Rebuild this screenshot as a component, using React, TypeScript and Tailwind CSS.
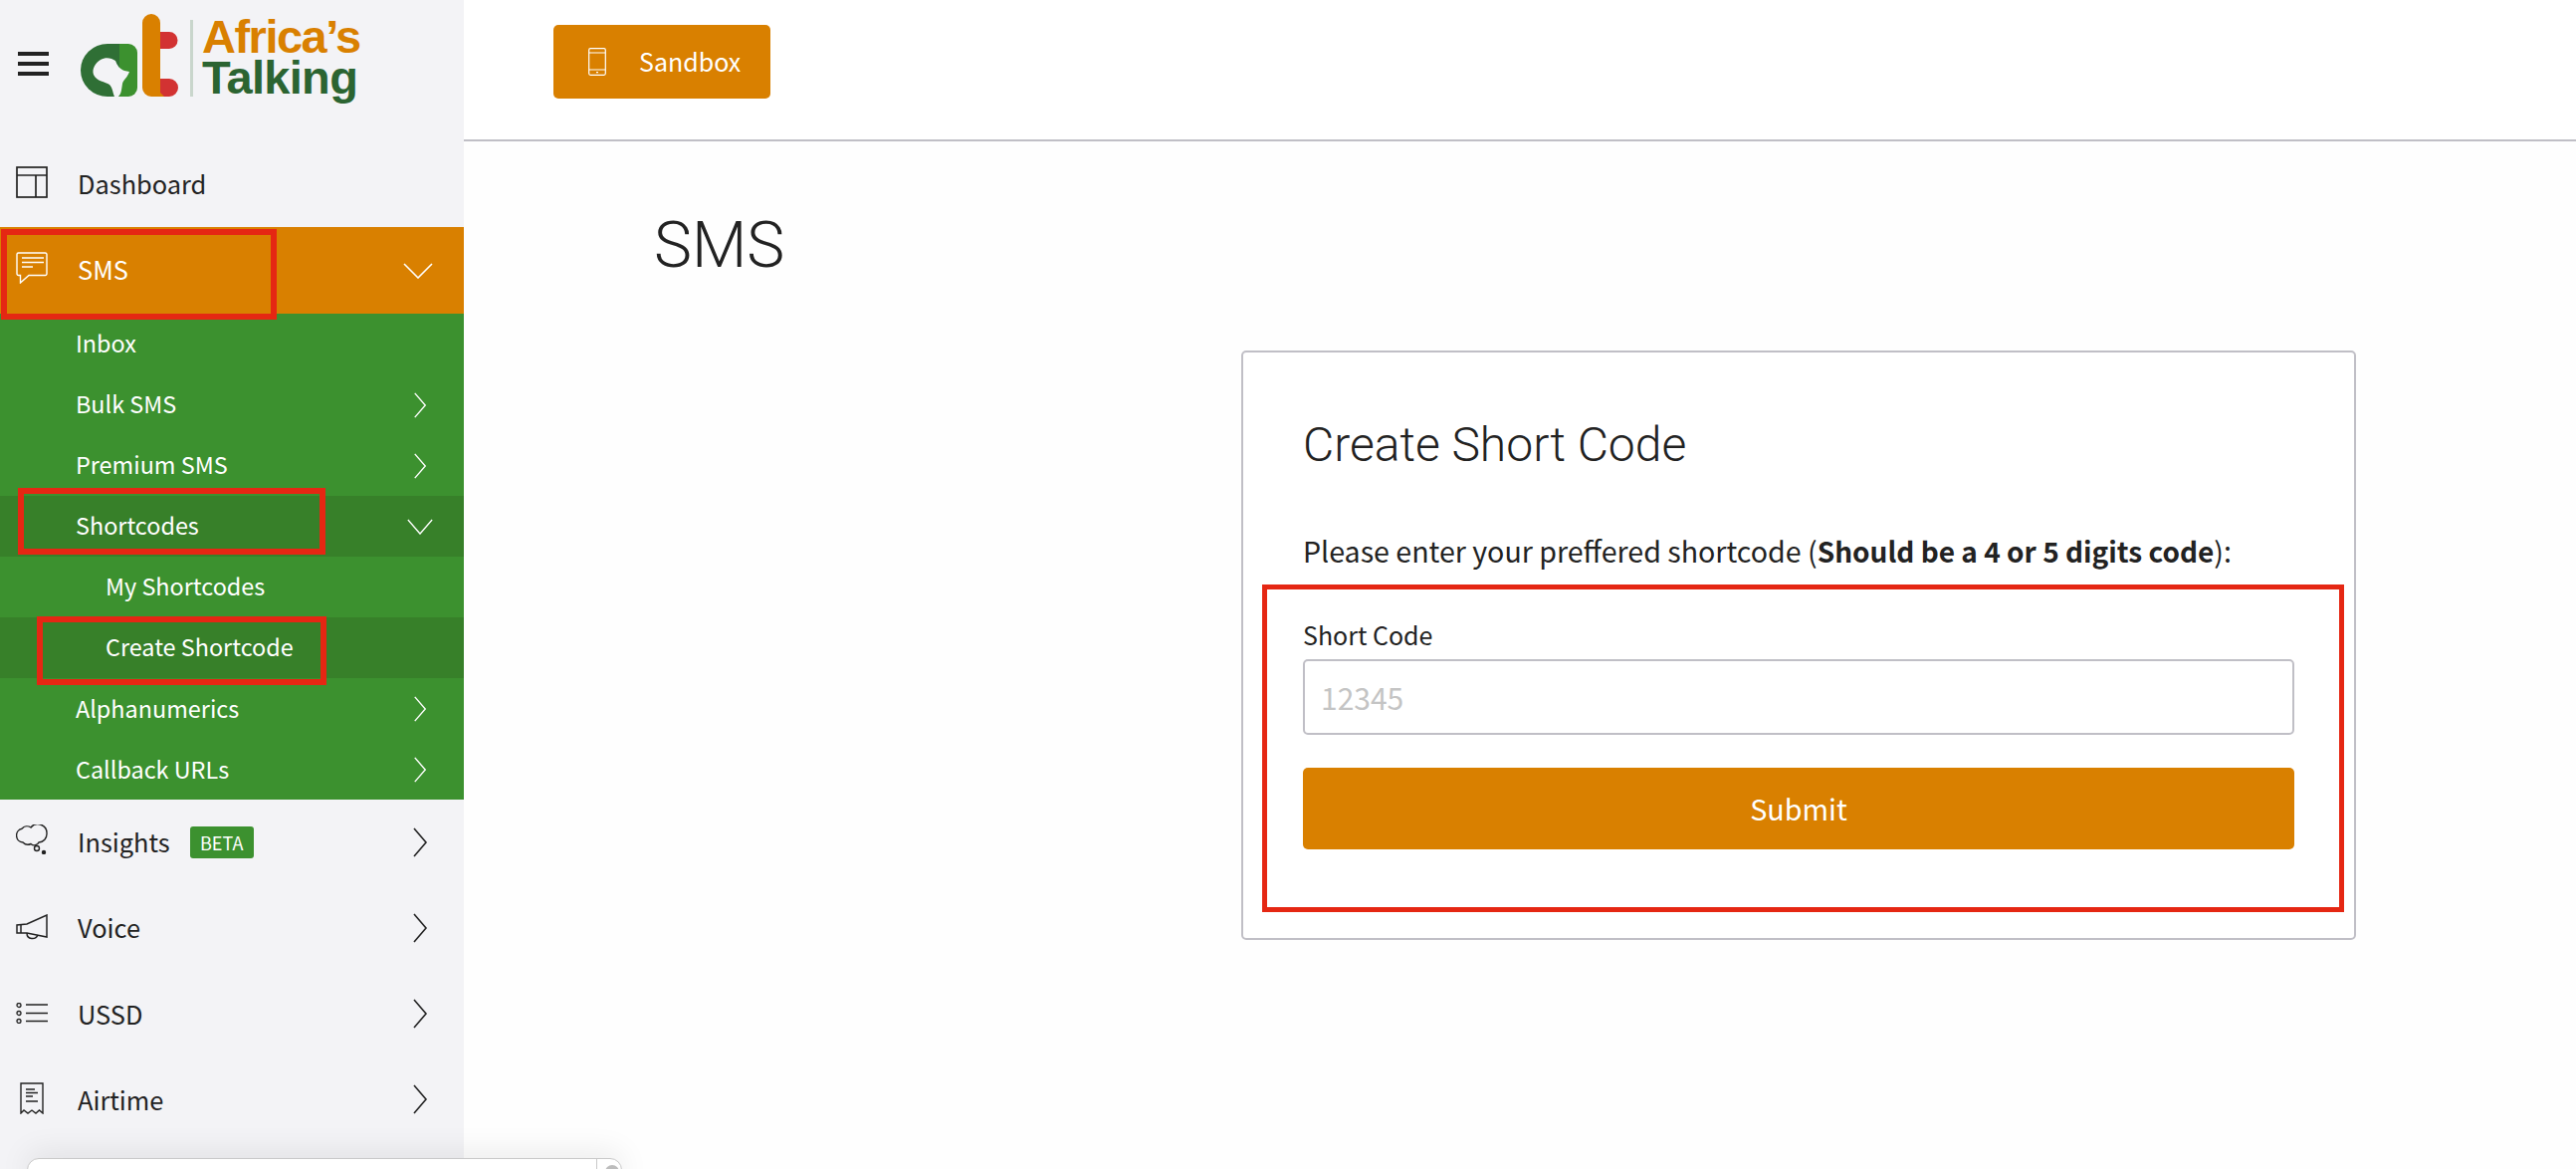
import React from 'react';

const sans = 'font-["Noto_Sans_CJK_SC","Noto_Sans",sans-serif]';

function ChevronRight({ className = '', h = 30, w = 16 }: { className?: string; h?: number; w?: number }) {
  return (
    <svg className={className} width={w} height={h} viewBox="0 0 16 30" preserveAspectRatio="none" fill="none" stroke="currentColor" strokeWidth="1.6">
      <path d="M2 1l12 14L2 29" />
    </svg>
  );
}

function ChevronDown({ className = '', w = 30 }: { className?: string; w?: number }) {
  return (
    <svg className={className} width={w} height="16" viewBox="0 0 30 16" preserveAspectRatio="none" fill="none" stroke="currentColor" strokeWidth="1.6">
      <path d="M1 1l14 14L29 1" />
    </svg>
  );
}

function Logo() {
  return (
    <div className="flex items-start ml-[31px] h-[120px]">
      <svg width="102" height="90" viewBox="80 10 102 90" className="mt-[10px] shrink-0">
        <path d="M120 44h-12a27 26.500 0 0 0 0 53h12z" fill="#2f6f35" />
        <path d="M120 44h9a9 9 0 0 1 9 9v35a9 9 0 0 1-9 9h-9z" fill="#3c912f" />
        <path d="M101 60C106 57 112 58 116 61C118 66 120 69 125 71L130 72C128 78 124 80 123 84C122 90 122 94 119 97L115 97C113 92 113 88 110 85C106 82 97 82 94 75C92 69 96 63 101 60Z" fill="#f3f3f6" />
        <path d="M161 32h9a8.500 8.500 0 0 1 0 17h-9zM161 79h9a9 9 0 0 1 0 18h-9z" fill="#d23232" />
        <path d="M152 14a9 9 0 0 1 9 9v70l4 4h-13a9 9 0 0 1-9-9V23a9 9 0 0 1 9-9z" fill="#d98000" />
      </svg>
      <div className="w-[3px] h-[77px] bg-[#c9d6cc] mt-[20px] ml-[9px] shrink-0" />
      <div className="ml-[9px] font-['Liberation_Sans',sans-serif] font-bold">
        <div className="text-[#d98000] text-[47px] leading-[41px] mt-[16px] tracking-[-1.5px]">Africa’s</div>
        <div className="text-[#2b6431] text-[47px] leading-[41px] tracking-[-0.7px]">Talking</div>
      </div>
    </div>
  );
}

function IconDashboard() {
  return (
    <svg width="32" height="32" viewBox="0 0 32 32" fill="none" stroke="#222" strokeWidth="1.7">
      <rect x="1" y="1" width="30" height="30" />
      <path d="M1 9h30M20 9v22" />
    </svg>
  );
}

function IconSms() {
  return (
    <svg width="32" height="32" viewBox="0 0 32 32" fill="none" stroke="#fff" strokeWidth="1.4">
      <path d="M2.5 1h27A1.5 1.5 0 0 1 31 2.500V22a1.500 1.500 0 0 1-1.500 1.500H13L4.500 31v-7.500h-2A1.500 1.500 0 0 1 1 22V2.500A1.500 1.500 0 0 1 2.500 1z" />
      <path d="M6 6h22M6 10.500h22M6 15h11" />
    </svg>
  );
}

function IconInsights() {
  return (
    <svg width="32" height="30" viewBox="0 0 32 30" fill="none" stroke="#222" strokeWidth="1.4">
      <path d="M7 18a7 7 0 0 1-1-13.800A7 7 0 0 1 15 3A9 9 0 0 1 31 9a8.500 8.500 0 0 1-8 9a5 5 0 0 1-8 1.500a7 7 0 0 1-8-1.500z" />
      <circle cx="21" cy="24" r="2.500" />
      <circle cx="28" cy="28" r="1.500" fill="#222" />
    </svg>
  );
}

function IconVoice() {
  return (
    <svg width="32" height="26" viewBox="0 0 32 26" fill="none" stroke="#222" strokeWidth="1.5">
      <path d="M31 1v22l-20-4H1v-8l10-1z" />
      <path d="M5 11v8M11 19c0 7 9 7 11 2" />
    </svg>
  );
}

function IconUssd() {
  return (
    <svg width="32" height="21" viewBox="0 0 32 21" fill="none" stroke="#222" strokeWidth="1.3">
      <circle cx="3" cy="2.500" r="2" />
      <circle cx="3" cy="10.500" r="2" />
      <circle cx="3" cy="18.500" r="2" />
      <path d="M10 2h22M10 10.500h22M10 18.500h22" strokeWidth="1.700" />
    </svg>
  );
}

function IconAirtime() {
  return (
    <svg width="24" height="32" viewBox="0 0 24 32" fill="none" stroke="#222" strokeWidth="1.4" className="ml-[4px]">
      <path d="M1 31V1h22v30l-3.500-3-3.500 3-4-3-4 3-4-3z" />
      <path d="M6 7h9M6 10.500h12M6 14h7M6 19h12" />
    </svg>
  );
}

function IconTablet() {
  return (
    <svg width="18" height="28" viewBox="0 0 18 28" fill="none" stroke="#fff" strokeWidth="1.2">
      <rect x="0.700" y="0.700" width="16.600" height="26.600" rx="1.500" />
      <path d="M1 5h16M1 22h16M8 24.700h2" />
    </svg>
  );
}

const greenRows = [
  { label: 'Inbox', arrow: null, active: false, indent: false, textClass: 'mb-[1px]' },
  { label: 'Bulk SMS', arrow: 'right', active: false, indent: false, textClass: 'mb-[1px]' },
  { label: 'Premium SMS', arrow: 'right', active: false, indent: false, textClass: 'mb-[1px]' },
  { label: 'Shortcodes', arrow: 'down', active: true, indent: false, textClass: 'mb-[1px]' },
  { label: 'My Shortcodes', arrow: null, active: false, indent: true, textClass: 'mb-[1px]' },
  { label: 'Create Shortcode', arrow: null, active: true, indent: true, textClass: 'mb-[1px]' },
  { label: 'Alphanumerics', arrow: 'right', active: false, indent: false, textClass: '' },
  { label: 'Callback URLs', arrow: 'right', active: false, indent: false, textClass: '' },
];

const lowerRows = [
  { label: 'Insights', icon: <IconInsights />, iconClass: 'mb-[6px]', textClass: 'mb-[2px]', beta: true },
  { label: 'Voice', icon: <IconVoice />, iconClass: 'mb-[3px]', textClass: 'mb-[2px]', beta: false },
  { label: 'USSD', icon: <IconUssd />, iconClass: 'mb-[2px]', textClass: '', beta: false },
  { label: 'Airtime', icon: <IconAirtime />, iconClass: 'mb-[3px]', textClass: '', beta: false },
];

export default function App() {
  return (
    <div className={`relative flex h-[1174px] w-[2588px] overflow-hidden bg-white text-[#222] ${sans}`}>
      <aside className="flex flex-col w-[466px] shrink-0 bg-[#f3f3f6]">
        <div className="flex items-start h-[142px]">
          <div className="flex flex-col gap-[6px] ml-[18px] mt-[52px] w-[31px] shrink-0">
            <span className="h-[4px] bg-[#222]" />
            <span className="h-[4px] bg-[#222]" />
            <span className="h-[4px] bg-[#222]" />
          </div>
          <Logo />
        </div>
        <div className="flex items-center h-[86px] pl-[16px] text-[25.4px]">
          <span className="w-[62px] mb-[4px]"><IconDashboard /></span>
          <span className="mb-[2px]">Dashboard</span>
        </div>
        <div className="flex items-center h-[87px] pl-[16px] pr-[31px] bg-[#d98000] text-white text-[25.4px]">
          <span className="w-[62px] mb-[5px]"><IconSms /></span>
          <span className="flex-1 mb-[2px]">SMS</span>
          <ChevronDown />
        </div>
        <div className="flex flex-col h-[488px] bg-[#3c912f] text-white text-[23.4px]">
          {greenRows.map((row) => (
            <div
              key={row.label}
              className={`flex items-center flex-1 ${row.arrow === 'down' ? 'pr-[31px]' : 'pr-[37px]'} ${row.indent ? 'pl-[106px]' : 'pl-[76px]'} ${row.active ? 'bg-[#378029]' : ''}`}
            >
              <span className={`flex-1 ${row.textClass}`}>{row.label}</span>
              {row.arrow === 'right' && <ChevronRight w={14} h={26} />}
              {row.arrow === 'down' && <ChevronDown w={26} />}
            </div>
          ))}
        </div>
        {lowerRows.map((row) => (
          <div key={row.label} className="flex items-center h-[86px] shrink-0 pl-[16px] pr-[36px] text-[25.4px]">
            <span className={`w-[62px] flex items-center ${row.iconClass}`}>{row.icon}</span>
            <span className={row.textClass}>{row.label}</span>
            {row.beta && (
              <span className="ml-[20px] h-[32px] w-[64px] flex items-center justify-center rounded-[3px] bg-[#3c912f] text-white text-[18px]">BETA</span>
            )}
            <ChevronRight className="ml-auto" />
          </div>
        ))}
      </aside>

      <main className="flex-1 flex flex-col">
        <header className="flex items-start h-[142px] shrink-0 border-b-2 border-[#c0bfc6] pl-[90px] pt-[25px]">
          <button className="flex items-center w-[218px] h-[74px] rounded-[5px] bg-[#d98000] text-white text-[25px] pl-[35px]">
            <IconTablet />
            <span className="ml-[33px]">Sandbox</span>
          </button>
        </header>
        <div className="flex-1 relative bg-[#fefefe]">
          <h1 className="font-['Roboto',sans-serif] font-light text-[64px] leading-[74px] mt-[68px] ml-[191px] text-[#222]">SMS</h1>
          <section className="mt-[68px] ml-[781px] w-[1120px] h-[592px] bg-white rounded-[5px] border-2 border-[#c0bfc6] px-[60px]">
            <h2 className="font-['Roboto',sans-serif] font-light text-[48px] leading-[56px] mt-[65px] text-[#222]">Create Short Code</h2>
            <p className="text-[28.6px] leading-[40px] mt-[58px]">
              Please enter your preffered shortcode (<b className="font-bold text-[28px]">Should be a 4 or 5 digits code</b>):
            </p>
            <label className="block text-[25px] leading-[34px] mt-[47px]">Short Code</label>
            <div className="mt-[8px] flex items-center h-[76px] rounded-[5px] border-2 border-[#c0bfc6] pl-[16px] text-[30px] text-[#c4c4c4]">12345</div>
            <button className="block w-full h-[82px] mt-[33px] rounded-[5px] bg-[#d98000] text-white text-[28.7px]">Submit</button>
          </section>
        </div>
      </main>

      {/* red annotation boxes drawn over the screenshot */}
      <div className="absolute left-[1px] top-[230px] w-[277px] h-[91px] border-[6px] border-[#e52713]" />
      <div className="absolute left-[18px] top-[490px] w-[309px] h-[67px] border-[6px] border-[#e52713]" />
      <div className="absolute left-[37px] top-[619px] w-[291px] h-[69px] border-[6px] border-[#e52713]" />
      <div className="absolute left-[1268px] top-[587px] w-[1087px] h-[329px] border-[5px] border-[#e52713]" />

      {/* cropped popup peeking in at the bottom */}
      <div className="absolute left-[27px] top-[1163px] w-[598px] h-[30px] rounded-t-[12px] border border-[#c9c9c9] bg-white shadow-[0_-6px_30px_rgba(0,0,0,0.08)]">
        <div className="absolute right-[24px] top-0 bottom-0 w-px bg-[#c9c9c9]" />
        <div className="absolute right-[2px] top-[6px] h-[14px] w-[14px] rounded-full bg-[#bdbdbd]" />
      </div>
    </div>
  );
}
